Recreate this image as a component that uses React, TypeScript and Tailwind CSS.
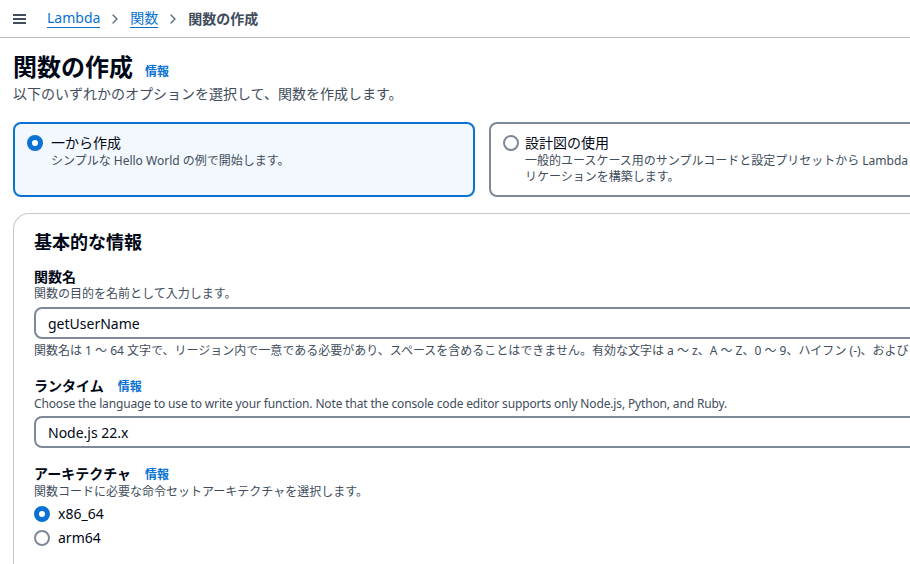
import { ChevronRight } from 'lucide-react';

const font = { fontFamily: '"Noto Sans", "Noto Sans CJK JP", sans-serif' };

function Radio({ checked }: { checked?: boolean }) {
  return checked ? (
    <span className="box-border block size-[16px] shrink-0 rounded-full border-[5px] border-[#0972d3] bg-white" />
  ) : (
    <span className="box-border block size-[16px] shrink-0 rounded-full border-2 border-[#7d8998] bg-white" />
  );
}

function Info({ className = '' }: { className?: string }) {
  return (
    <span className={`text-[12px] font-bold text-[#0972d3] ${className}`}>
      情報
    </span>
  );
}

export default function App() {
  return (
    <div
      className="h-[564px] w-[910px] overflow-hidden bg-white text-[#000716]"
      style={font}
    >
      {/* breadcrumbs */}
      <header className="flex h-[38px] items-center border-b border-[#b6bec9] pl-[13px]">
        <div className="flex h-[10px] w-[13px] flex-col justify-between">
          <span className="block h-[2px] bg-[#414d5c]" />
          <span className="block h-[2px] bg-[#414d5c]" />
          <span className="block h-[2px] bg-[#414d5c]" />
        </div>
        <nav className="ml-[21px] flex items-center text-[14px]">
          <span className="border-b border-[#0972d3] leading-[18px] text-[#0972d3]">
            Lambda
          </span>
          <ChevronRight className="mx-[7px] size-[16px] text-[#5f6b7a]" strokeWidth={2} />
          <span className="border-b border-[#0972d3] leading-[18px] text-[#0972d3]">
            関数
          </span>
          <ChevronRight className="mx-[7px] size-[16px] text-[#5f6b7a]" strokeWidth={2} />
          <span className="font-bold leading-[18px] text-[#414d5c]">関数の作成</span>
        </nav>
      </header>

      <main className="pl-[13px]">
        <div className="mt-[13px] flex items-baseline">
          <h1 className="text-[24px] font-bold leading-[32px]">関数の作成</h1>
          <Info className="ml-[12px]" />
        </div>
        <p className="mt-[1px] text-[14px] leading-[20px] text-[#414d5c]">
          以下のいずれかのオプションを選択して、関数を作成します。
        </p>

        {/* options */}
        <div className="mt-[18px] flex gap-[14px]">
          <div className="h-[75px] w-[462px] shrink-0 rounded-[8px] border-2 border-[#0972d3] bg-[#f2f8fd] px-[12px] pt-[9px]">
            <div className="flex items-center gap-[8px]">
              <Radio checked />
              <span className="text-[14px] leading-[20px]">一から作成</span>
            </div>
            <p className="ml-[24px] text-[12px] leading-[16px] text-[#414d5c]">
              シンプルな Hello World の例で開始します。
            </p>
          </div>
          <div className="h-[75px] w-[480px] shrink-0 rounded-[8px] border-2 border-[#7d8998] px-[12px] pt-[9px]">
            <div className="flex items-center gap-[6px]">
              <Radio />
              <span className="text-[14px] leading-[20px]">設計図の使用</span>
            </div>
            <p className="ml-[22px] w-[420px] text-[12px] leading-[16px] text-[#414d5c]">
              一般的ユースケース用のサンプルコードと設定プリセットから Lambda アプリケーションを構築します。
            </p>
          </div>
        </div>

        {/* basic info panel */}
        <section className="mt-[16px] h-[400px] w-[960px] rounded-tl-[16px] border-l border-t border-[#c6c6cd] pl-[20px] pt-[14px]">
          <h2 className="text-[18px] font-bold leading-[28px]">基本的な情報</h2>

          <div className="mt-[12px]">
            <div className="text-[14px] font-bold leading-[18px]">関数名</div>
            <p className="text-[12px] leading-[16px] text-[#414d5c]">
              関数の目的を名前として入力します。
            </p>
            <div className="mt-[5px] flex h-[32px] items-center rounded-[8px] border-2 border-[#7d8998] pl-[12px] text-[14px]">
              getUserName
            </div>
            <p className="mt-[4px] whitespace-nowrap text-[12px] leading-[16px] text-[#414d5c]">
              関数名は 1 〜 64 文字で、リージョン内で一意である必要があり、スペースを含めることはできません。有効な文字は a 〜 z、A 〜 Z、0 〜 9、ハイフン (-)、およびアンダースコア (_) です。
            </p>
          </div>

          <div className="mt-[18px]">
            <div className="flex items-baseline">
              <span className="text-[14px] font-bold leading-[18px]">ランタイム</span>
              <Info className="ml-[14px]" />
            </div>
            <p className="text-[12px] leading-[16px] tracking-[-0.15px] text-[#414d5c]">
              Choose the language to use to write your function. Note that the console code editor supports only Node.js, Python, and Ruby.
            </p>
            <div className="mt-[4px] flex h-[32px] items-center rounded-[8px] border-2 border-[#7d8998] pl-[12px] text-[14px]">
              Node.js 22.x
            </div>
          </div>

          <div className="mt-[17px]">
            <div className="flex items-baseline">
              <span className="text-[14px] font-bold leading-[18px]">アーキテクチャ</span>
              <Info className="ml-[14px]" />
            </div>
            <p className="text-[12px] leading-[16px] text-[#414d5c]">
              関数コードに必要な命令セットアーキテクチャを選択します。
            </p>
            <div className="mt-[4px] flex flex-col gap-[4px]">
              <label className="flex items-center gap-[8px] text-[14px] leading-[20px]">
                <Radio checked />
                x86_64
              </label>
              <label className="flex items-center gap-[8px] text-[14px] leading-[20px]">
                <Radio />
                arm64
              </label>
            </div>
          </div>
        </section>
      </main>
    </div>
  );
}
